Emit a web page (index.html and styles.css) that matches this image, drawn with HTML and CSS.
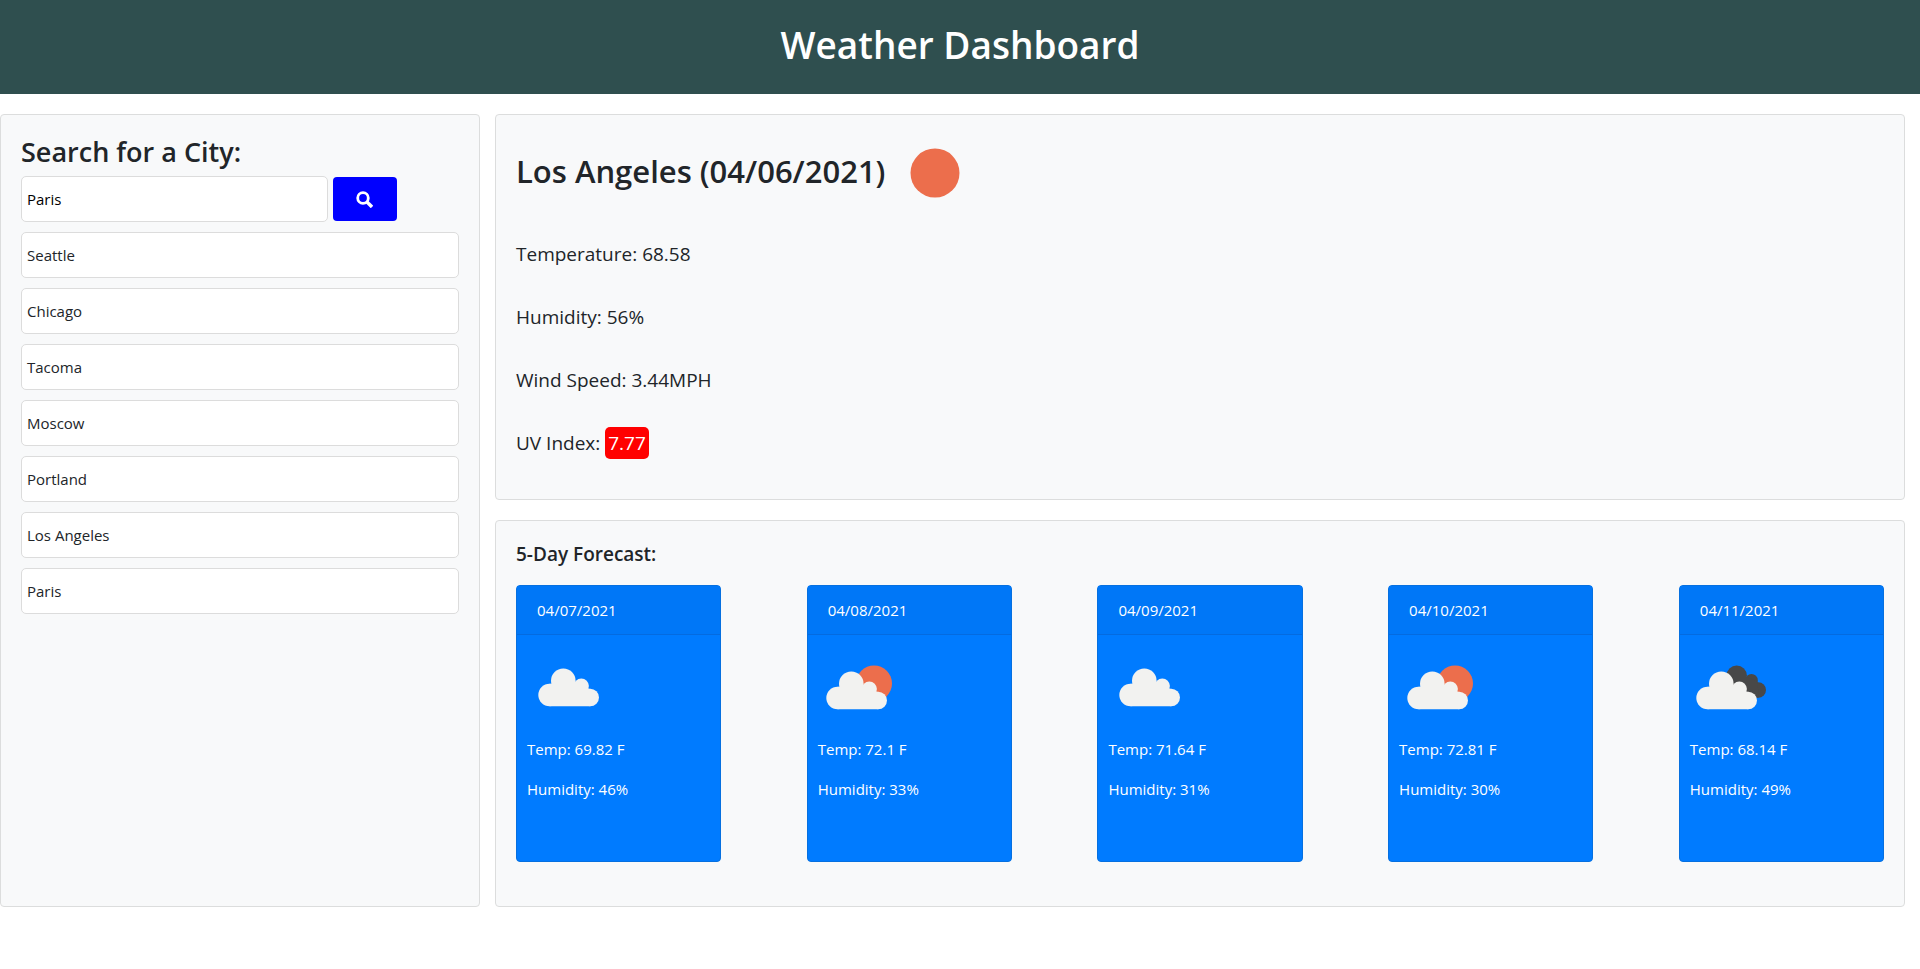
FILE: index.html
```html
<!DOCTYPE html>
<html lang="en">
<head>
<meta charset="utf-8">
<meta name="viewport" content="width=device-width, initial-scale=1">
<title>Weather Dashboard</title>
<link rel="stylesheet" href="styles.css">
</head>
<body>
<svg class="defs" aria-hidden="true">
  <symbol id="cloud" viewBox="0 0 100 100">
    <g fill="#f2f2f0">
      <circle cx="46.3" cy="44.7" r="12.3"/><circle cx="64.3" cy="50.1" r="7.6"/>
      <circle cx="32.6" cy="59" r="11.3"/><circle cx="73.2" cy="61.5" r="8.8"/>
      <path d="M32.6 47.7H34L46 44L58 46L64 47L71.8 52.7H73.2V70.3H32.6Z"/>
    </g>
  </symbol>
  <symbol id="cloud-sun" viewBox="0 0 100 100">
    <circle cx="66" cy="47.4" r="18" fill="#ec6e4c"/>
    <use href="#cloud" x="-3" y="3" width="100" height="100"/>
  </symbol>
  <symbol id="cloud-dark" viewBox="0 0 100 100">
    <g fill="#484848">
      <circle cx="56.7" cy="39.6" r="10.2"/><circle cx="71.5" cy="44.3" r="6.3"/>
      <circle cx="78.3" cy="54" r="7.7"/>
      <path d="M56 36L66 41L77.8 45.5L78.3 61.7H60L50 45Z"/>
    </g>
    <use href="#cloud" x="-5" y="3" width="100" height="100"/>
  </symbol>
</svg>
<header class="banner"><h1>Weather Dashboard</h1></header>
<main class="layout">
  <aside class="panel search">
    <h2 class="search-title"><label for="city">Search for a City:</label></h2>
    <form class="search-form">
      <input id="city" class="field" type="text" value="Paris">
      <button class="search-button" type="button" aria-label="Search">
        <svg width="17" height="17" viewBox="0 0 17 17" fill="none" stroke="#fff"><circle cx="7" cy="7" r="5.3" stroke-width="2.8"/><path d="M11 11L16 16" stroke-width="3.4"/></svg>
      </button>
    </form>
    <ul class="history">
      <li class="field">Seattle</li>
      <li class="field">Chicago</li>
      <li class="field">Tacoma</li>
      <li class="field">Moscow</li>
      <li class="field">Portland</li>
      <li class="field">Los Angeles</li>
      <li class="field">Paris</li>
    </ul>
  </aside>
  <div class="results">
    <section class="panel current">
      <div class="current-head">
        <h2>Los Angeles (04/06/2021)</h2>
        <svg class="icon" viewBox="0 0 100 100"><circle cx="50" cy="50" r="24.5" fill="#ec6e4c"/></svg>
      </div>
      <p>Temperature: 68.58</p>
      <p>Humidity: 56%</p>
      <p>Wind Speed: 3.44MPH</p>
      <p>UV Index: <span class="uv">7.77</span></p>
    </section>
    <section class="panel forecast">
      <h3>5-Day Forecast:</h3>
      <div class="days">
        <article class="day">
          <h4>04/07/2021</h4>
          <svg class="icon"><use href="#cloud"/></svg>
          <p>Temp: 69.82 F</p><p>Humidity: 46%</p>
        </article>
        <article class="day">
          <h4>04/08/2021</h4>
          <svg class="icon"><use href="#cloud-sun"/></svg>
          <p>Temp: 72.1 F</p><p>Humidity: 33%</p>
        </article>
        <article class="day">
          <h4>04/09/2021</h4>
          <svg class="icon"><use href="#cloud"/></svg>
          <p>Temp: 71.64 F</p><p>Humidity: 31%</p>
        </article>
        <article class="day">
          <h4>04/10/2021</h4>
          <svg class="icon"><use href="#cloud-sun"/></svg>
          <p>Temp: 72.81 F</p><p>Humidity: 30%</p>
        </article>
        <article class="day">
          <h4>04/11/2021</h4>
          <svg class="icon"><use href="#cloud-dark"/></svg>
          <p>Temp: 68.14 F</p><p>Humidity: 49%</p>
        </article>
      </div>
    </section>
  </div>
</main>
</body>
</html>
```
FILE: styles.css
```css
*, *::before, *::after { box-sizing: border-box; }
body {
  margin: 0;
  background: #fff;
  color: #212529;
  font: 400 15px/24px "Open Sans", "Noto Sans", sans-serif;
}
h1, h2, h3, h4, p, ul { margin: 0; padding: 0; }
h1, h2, h3 { font-weight: 600; }
.defs { position: absolute; width: 0; height: 0; }
.icon { display: block; width: 100px; height: 100px; flex: none; }

.banner { padding: 20px; background: #2f4f4f; color: #fff; text-align: center; }
.banner h1 { font-size: 37px; line-height: 50px; padding-bottom: 4px; }

.layout { display: grid; grid-template-columns: 25vw 1fr; gap: 15px; padding: 20px 15px 20px 0; }
.panel { background: #f8f9fa; border: 1px solid #dcdddd; border-radius: 4px; padding: 20px; }

.search-title { font-size: 27px; line-height: 34px; margin-bottom: 7px; }
.search-form { display: flex; align-items: center; gap: 5px; margin-bottom: 10px; }
.field {
  display: block;
  height: 46px;
  padding: 10px 5px;
  background: #fff;
  border: 1px solid #dcdcdc;
  border-radius: 5px;
  font: 400 15px/24px "Open Sans", "Noto Sans", sans-serif;
}
.search-form .field { width: 70%; color: #000; }
.search-button {
  display: flex;
  align-items: center;
  justify-content: center;
  width: 64px;
  height: 44px;
  padding: 0;
  border: 0;
  border-radius: 4px;
  background: #00f;
}
.history { display: grid; gap: 10px; list-style: none; }

.results { display: grid; gap: 20px; align-content: start; }
.current { padding-top: 8px; padding-bottom: 24px; }
.current-head { display: flex; align-items: center; }
.current h2 { font-size: 31px; line-height: 40px; padding-bottom: 4px; }
.current p { font-size: 19px; line-height: 31px; padding: 16px 0; }
.uv { background: red; color: #fff; border-radius: 5px; padding: 3px; }

.forecast { padding-bottom: 44px; }
.forecast h3 { font-size: 19px; line-height: 26px; margin-bottom: 18px; }
.days { display: flex; justify-content: space-between; }
.day {
  width: 15%;
  min-height: 277px;
  background: #007bff;
  color: #fff;
  border: 1px solid #0670e0;
  border-radius: 4px;
}
.day h4 { font-size: 15px; line-height: 24px; font-weight: 400; padding: 12px 20px; background: #0077f7; border-bottom: 1px solid #046be0; }
.day .icon { margin: 1px 0; }
.day p { padding: 0 10px; margin-bottom: 16px; }
```
